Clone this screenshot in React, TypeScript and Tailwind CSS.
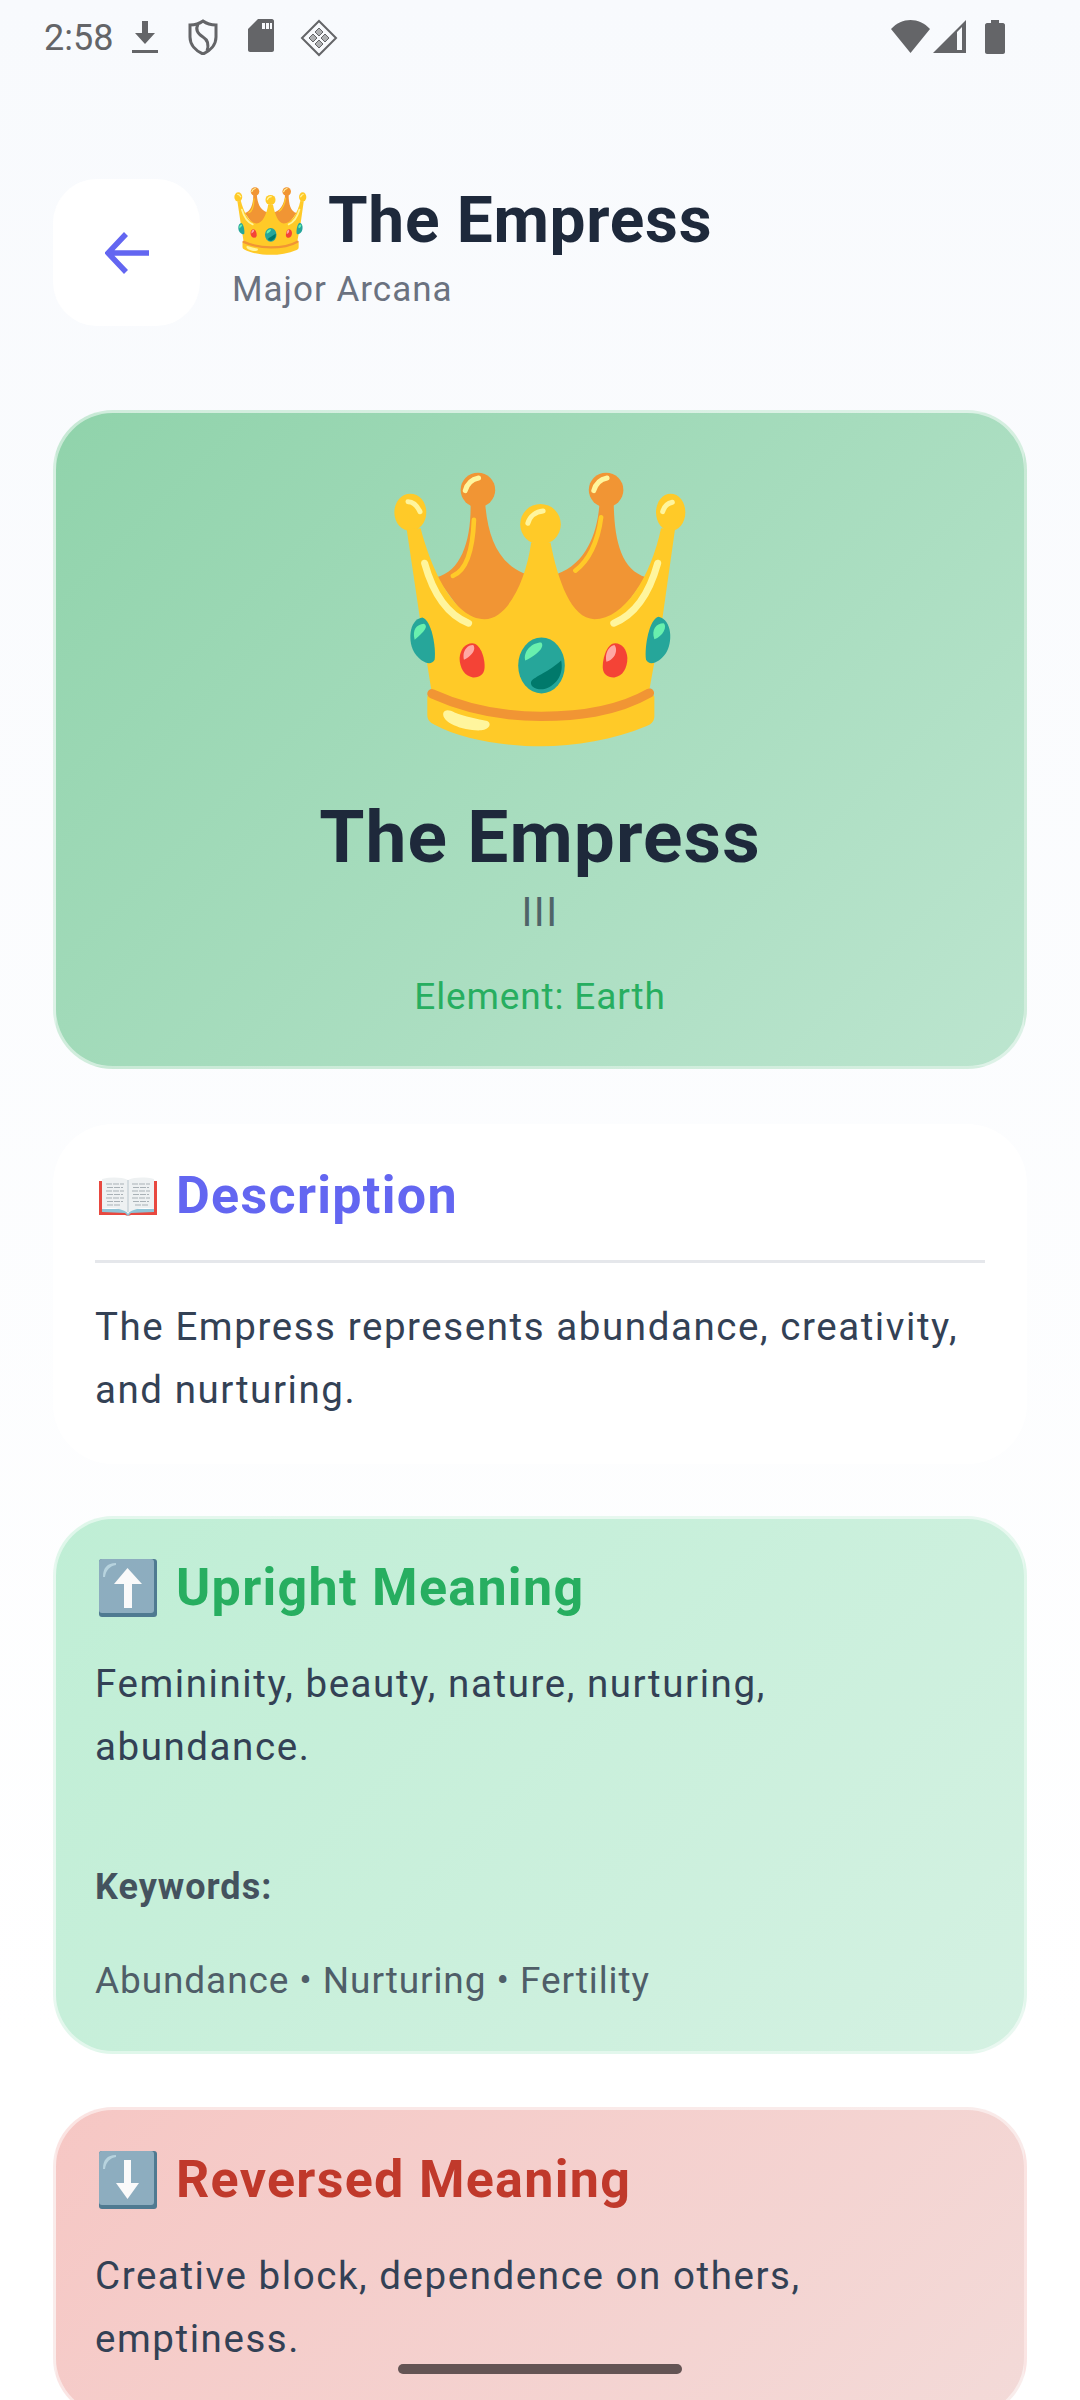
import * as React from "react"

// crown emoji, coords traced from the big hero version
function Crown({ className }: { className?: string }) {
    return (
        <svg viewBox="158 126 880 826" className={className}>
            <circle cx="410" cy="180" r="52" fill="#F19534" />
            <circle cx="795" cy="180" r="52" fill="#F19534" />
            <path d="M388 222C390 330 360 425 285 442L400 600H800L915 442C840 420 820 330 818 222H775C770 300 740 400 648 432H552C470 400 440 320 432 222Z" fill="#F19534" />
            <ellipse cx="207" cy="247" rx="48" ry="56" fill="#FFCA28" />
            <ellipse cx="989" cy="247" rx="44" ry="56" fill="#FFCA28" />
            <circle cx="598" cy="283" r="61" fill="#FFCA28" />
            <path d="M196 298L235 560L270 780L258 800V855C258 870 265 878 280 885C360 930 500 950 600 950C700 950 820 930 915 890C930 885 940 875 940 860V800L925 780L965 560L1002 298L960 295C930 440 850 568 760 568C690 568 650 450 628 338H570C555 450 500 568 430 568C340 568 270 420 238 295Z" fill="#FFCA28" />
            <path d="M272 792C400 850 520 860 600 860C700 860 820 850 925 790" fill="none" stroke="#F19534" strokeWidth="28" strokeLinecap="round" />
            <path d="M250 400C275 490 320 555 382 580M950 400C925 490 880 555 818 580" fill="none" stroke="#FFF59D" strokeWidth="21" strokeLinecap="round" />
            <path d="M398 270C395 350 380 420 335 438M780 262C770 340 740 395 703 422" fill="none" stroke="#FFCA28" strokeWidth="14" strokeLinecap="round" />
            <path d="M306 850C310 838 325 840 340 848C370 860 410 868 438 874C452 880 446 900 420 902C370 905 300 880 306 850Z" fill="#FFF59D" />
            <path d="M200 215C215 215 228 228 236 245M560 280C566 258 585 245 606 243M372 182C378 160 392 148 412 144M758 182C764 160 778 148 798 144M965 245C970 228 980 220 994 217" fill="none" stroke="#FFF59D" strokeWidth="15" strokeLinecap="round" />
            <path d="M243 563C270 570 285 650 280 690C270 710 240 700 220 670C200 640 200 570 243 563Z" fill="#26A69A" />
            <path d="M952 561C925 568 910 650 915 690C925 710 955 700 975 670C995 640 995 570 952 561Z" fill="#26A69A" />
            <path d="M220 630C212 600 225 585 248 582C262 590 250 605 220 630Z" fill="#69F0AE" />
            <path d="M940 628C930 600 945 580 968 580C980 590 965 620 940 628Z" fill="#69F0AE" />
            <path d="M393 640C415 640 432 680 430 715C428 735 415 744 395 743C370 740 355 715 355 685C356 660 372 640 393 640Z" fill="#F44336" />
            <path d="M822 640C800 640 784 680 785 715C787 735 800 744 820 743C845 740 859 715 859 685C858 660 843 640 822 640Z" fill="#F44336" />
            <path d="M368 690C362 665 378 645 396 646C406 660 390 680 368 690ZM796 696C790 670 805 648 820 646C832 660 822 690 796 696Z" fill="#FFA8A4" />
            <ellipse cx="601" cy="707" rx="70" ry="84" fill="#26A69A" />
            <path d="M552 692C545 665 572 638 600 638C612 650 590 675 552 692Z" fill="#69F0AE" />
            <path d="M660 692C668 730 650 765 610 778C585 782 565 770 570 755C580 740 625 725 660 692Z" fill="#00796B" />
        </svg>
    )
}

function BookEmoji() {
    return (
        <svg viewBox="0 0 58 40" className="w-[58px] h-[40px] shrink-0 ml-[4px]">
            <path d="M0 5H3V35L27 36L29 40L31 36L55 35V5H58V39H32L29 40L26 39H0Z" fill="#E8483F" />
            <path d="M3 33H26L29 38L32 33H55V36L32 37L29 40L26 37L3 36Z" fill="#8FC3D6" />
            <path d="M3 3C12 1 22 1 29 4C36 1 46 1 55 3V33C46 31 36 32 29 37C22 32 12 31 3 33Z" fill="#EEF1F2" />
            <path d="M29 4V36" stroke="#CBD5DA" strokeWidth="1.5" />
            <path d="M7 8H25M8 11.500H24M7 15H25M8 18.500H24M7 22H25M8 25.500H24M8 29H22M33 8H51M34 11.500H50M33 15H51M34 18.500H50M33 22H51M34 25.500H50M36 29H50" stroke="#A9B1B6" strokeWidth="1" strokeDasharray="6 1" />
        </svg>
    )
}

function ArrowBox({ down }: { down?: boolean }) {
    return (
        <svg viewBox="0 0 58 58" className="w-[58px] h-[58px] shrink-0 ml-[4px]">
            <rect width="58" height="58" rx="3" fill="#4F7A91" />
            <rect x="0" y="0" width="55" height="54" rx="3" fill="#8DADBF" />
            <path d="M4 18C4 9 8 4 17 4V6C11 7 7 11 6 18Z" fill="#B7D3DE" />
            {down ? (
                <path d="M25 9H32V32H40L28.500 48L17 32H25Z" fill="#FAFAFA" />
            ) : (
                <path d="M28.500 9L43 25H33V49H25V25H15Z" fill="#FAFAFA" />
            )}
        </svg>
    )
}

function StatusBar() {
    const grey = "#646568"
    return (
        <div className="h-[70px] flex items-start justify-between pt-[19px] pl-[44px] pr-[75px]">
            <div className="flex items-start">
                <span className="text-[36px] leading-[38px] text-[#646568] w-[88px]">2:58</span>
                <svg viewBox="0 0 26 36" className="w-[26px] h-[36px]">
                    <path d="M10 2H16V14H23L13 25L3 14H10ZM0 31H26V34H0Z" fill={grey} />
                </svg>
                <svg viewBox="0 0 30 36" className="w-[30px] h-[36px] ml-[30px]" fill="none" stroke={grey} strokeWidth="3">
                    <path d="M15 2C19 5 24 6 28 6V18C28 26 22 32 15 35C8 32 2 26 2 18V6C6 6 11 5 15 2Z" />
                    <path d="M10 5C7 11 10 15 15 18C20 21 21 26 19 32" />
                </svg>
                <svg viewBox="0 0 26 33" className="w-[26px] h-[33px] ml-[30px]">
                    <path d="M10 0H24C25 0 26 1 26 2V31C26 32 25 33 24 33H2C1 33 0 32 0 31V10ZM14 4V10H17V4ZM18 4V10H21V4ZM22 4V10H24V4Z" fill={grey} fillRule="evenodd" />
                </svg>
                <svg viewBox="0 0 38 38" className="w-[38px] h-[38px] ml-[26px]" fill="none" stroke={grey}>
                    <path d="M19 2L36 19L19 36L2 19Z" strokeWidth="2" />
                    <path d="M19 9L23 13L19 17L15 13ZM9 19L13 15L17 19L13 23ZM29 19L25 15L21 19L25 23ZM19 29L23 25L19 21L15 25Z" strokeWidth="1" fill={grey} fillOpacity="0.5" />
                </svg>
            </div>
            <div className="flex items-start">
                <svg viewBox="0 0 39 33" className="w-[39px] h-[33px] mt-px">
                    <path d="M0 9C11 -3 28 -3 39 9L19.500 33Z" fill={grey} />
                </svg>
                <svg viewBox="0 0 33 33" className="w-[33px] h-[33px] ml-[3px] mt-px">
                    <path d="M33 0V33H0ZM24 12V30H29V7Z" fill={grey} fillRule="evenodd" />
                </svg>
                <svg viewBox="0 0 20 34" className="w-[20px] h-[34px] ml-[19px] mt-px">
                    <path d="M6 0H14V3H18C19 3 20 4 20 5V32C20 33 19 34 18 34H2C1 34 0 33 0 32V5C0 4 1 3 2 3H6Z" fill={grey} />
                </svg>
            </div>
        </div>
    )
}

export default function App() {
    return (
        <div className="relative h-[2400px] overflow-hidden bg-[linear-gradient(180deg,#f8fafd_0%,#ffffff_85%)] font-['Roboto',sans-serif]">
            <StatusBar />

            {/* Header */}
            <div className="flex items-start mt-[109px] px-[53px]">
                <button className="w-[147px] h-[147px] rounded-[44px] bg-white flex items-center justify-center shrink-0">
                    <svg viewBox="0 0 44 42" className="w-[44px] h-[42px]" fill="none" stroke="#6366f1" strokeWidth="5.500">
                        <path d="M44 21H4M21 2L3 21L21 40" />
                    </svg>
                </button>
                <div className="ml-[32px] pt-[4px]">
                    <div className="flex items-center h-[76px]">
                        <Crown className="w-[73px] h-[68px] shrink-0 ml-[2px] mr-[21px]" />
                        <h1 className="text-[64px] leading-[76px] tracking-[0.7px] font-bold text-[#1e293b]">The Empress</h1>
                    </div>
                    <p className="mt-[9px] text-[35px] leading-[44px] tracking-[1px] text-[#6b7280]">Major Arcana</p>
                </div>
            </div>

            {/* Card hero */}
            <div className="mx-[53px] mt-[84px] rounded-[60px] border-[3px] border-white/50 bg-[linear-gradient(135deg,#90d3ab,#bce5cf)] pt-[59px] pb-[44px] flex flex-col items-center">
                <Crown className="w-[293px] h-[275px]" />
                <h2 className="mt-[47px] text-[73px] leading-[86px] tracking-[1.1px] font-bold text-[#1e293b]">The Empress</h2>
                <p className="mt-[9px] text-[40px] leading-[48px] tracking-[1.5px] text-[#4f6468]">III</p>
                <p className="mt-[35px] text-[37px] leading-[50px] tracking-[0.85px] text-[#27ae60]">Element: Earth</p>
            </div>

            {/* Description */}
            <div className="mx-[53px] mt-[55px] rounded-[60px] bg-white px-[42px] pt-[41px] pb-[43px]">
                <div className="flex items-center gap-[19px] h-[62px]">
                    <BookEmoji />
                    <h3 className="text-[52px] leading-[62px] tracking-[1.3px] font-bold text-[#6366f1]">Description</h3>
                </div>
                <div className="h-[3px] bg-[#e5e7eb] mt-[33px] mb-[32px]" />
                <p className="text-[38.5px] leading-[63px] tracking-[1.57px] text-[#334155]">
                    The Empress represents abundance, creativity, and nurturing.
                </p>
            </div>

            {/* Upright */}
            <div className="mx-[53px] mt-[52px] rounded-[60px] border-[3px] border-white/50 bg-[linear-gradient(135deg,#bfeed5,#d4f1e2)] px-[39px] pt-[38px] pb-[45px]">
                <div className="flex items-center gap-[19px] h-[62px]">
                    <ArrowBox />
                    <h3 className="text-[52px] leading-[62px] tracking-[1.3px] font-bold text-[#27ae60]">Upright Meaning</h3>
                </div>
                <p className="mt-[33px] text-[38.5px] leading-[63px] tracking-[1.57px] text-[#334155]">
                    Femininity, beauty, nature, nurturing, abundance.
                </p>
                <p className="mt-[85px] text-[36px] leading-[48px] tracking-[1px] font-bold text-[#44525e]">Keywords:</p>
                <p className="mt-[45px] text-[37px] leading-[50px] tracking-[0.9px] text-[#4f5e68]">Abundance • Nurturing • Fertility</p>
            </div>

            {/* Reversed */}
            <div className="mx-[53px] mt-[53px] rounded-[60px] border-[3px] border-white/50 bg-[linear-gradient(135deg,#f6c7c4,#f3dad8)] px-[39px] pt-[39px] pb-[45px]">
                <div className="flex items-center gap-[19px] h-[62px]">
                    <ArrowBox down />
                    <h3 className="text-[52px] leading-[62px] tracking-[1.3px] font-bold text-[#c0392b]">Reversed Meaning</h3>
                </div>
                <p className="mt-[33px] text-[38.5px] leading-[63px] tracking-[1.57px] text-[#334155]">
                    Creative block, dependence on others, emptiness.
                </p>
            </div>

            {/* home indicator */}
            <div className="absolute left-[398px] top-[2364px] w-[284px] h-[10px] rounded-full bg-[#645454]" />
        </div>
    )
}
